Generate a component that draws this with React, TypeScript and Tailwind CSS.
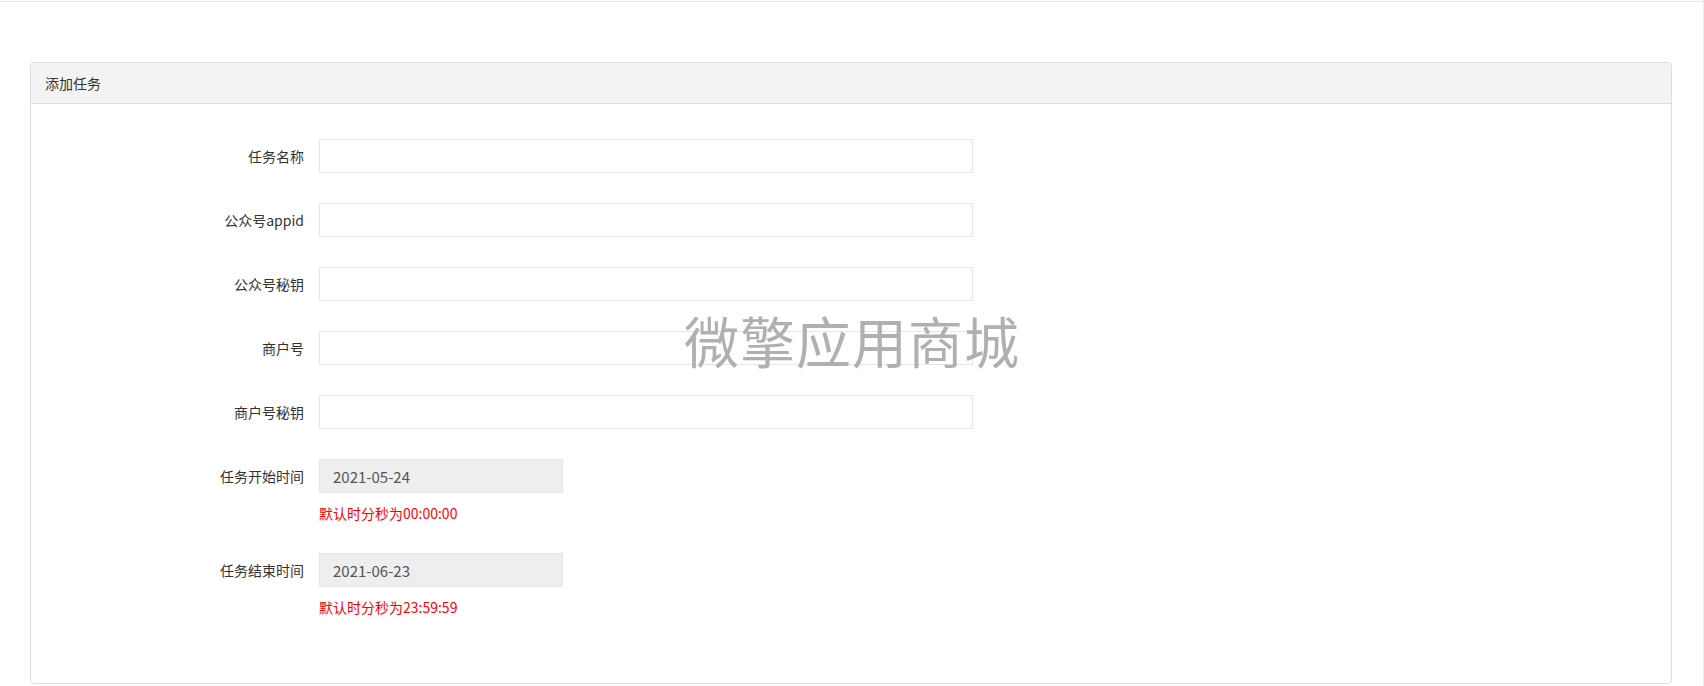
import type { ReactNode } from "react";

type FieldRowProps = {
  label: string;
  children: ReactNode;
  help?: string;
};

const textFields = ["任务名称", "公众号appid", "公众号秘钥", "商户号", "商户号秘钥"];

function FieldRow({ label, children, help }: FieldRowProps) {
  return (
    <div className="flex items-start gap-[15px]">
      <label className="w-[273px] h-[34px] flex items-center justify-end text-[14px] text-[#333]">
        {label}
      </label>
      <div className="flex flex-col">
        {children}
        {help ? (
          <p className="mt-[10px] text-[14px] leading-[20px] text-[#ff0000]">{help}</p>
        ) : null}
      </div>
    </div>
  );
}

export default function App() {
  return (
    <div
      className="relative w-full h-[686px] bg-white border-r border-[#ececec] overflow-hidden"
      style={{ fontFamily: '"Noto Sans CJK SC", "Noto Sans", sans-serif' }}
    >
      <div className="h-[2px] border-b border-[#e6e6e6]" />

      <div className="pt-[60px] pl-[30px] pr-[31px]">
        <section className="rounded-[4px] border border-[#dddddd] bg-white">
          <div className="h-[41px] flex items-center px-[14px] bg-[#f3f3f3] border-b border-[#dddddd] rounded-t-[4px] text-[14px] text-[#333]">
            添加任务
          </div>
          <div className="pt-[35px] pb-[66px] flex flex-col gap-[30px]">
            {textFields.map((label) => (
              <FieldRow key={label} label={label}>
                <input
                  type="text"
                  className="w-[654px] h-[34px] border border-[#e6e6e6] bg-white px-3 text-[14px] text-[#555] outline-none"
                />
              </FieldRow>
            ))}
            <FieldRow label="任务开始时间" help="默认时分秒为00:00:00">
              <input
                type="text"
                readOnly
                defaultValue="2021-05-24"
                className="w-[244px] h-[34px] border border-[#e6e6e6] bg-[#eeeeee] px-[13px] text-[15px] text-[#555] outline-none"
              />
            </FieldRow>
            <FieldRow label="任务结束时间" help="默认时分秒为23:59:59">
              <input
                type="text"
                readOnly
                defaultValue="2021-06-23"
                className="w-[244px] h-[34px] border border-[#e6e6e6] bg-[#eeeeee] px-[13px] text-[15px] text-[#555] outline-none"
              />
            </FieldRow>
          </div>
        </section>
      </div>

      {/* site watermark over the form */}
      <div className="absolute left-[684px] top-[312px] text-[55px] leading-none tracking-[1px] text-[#b0b0b0] pointer-events-none select-none">
        微擎应用商城
      </div>
    </div>
  );
}
